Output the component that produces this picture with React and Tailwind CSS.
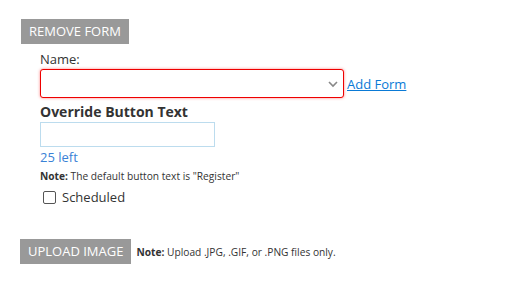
import React from 'react';

export default function App() {
  return (
    <div className="min-h-screen bg-white pt-[18px] pl-[21px] text-[#333] font-['Open_Sans',sans-serif]">
      <button className="h-[25px] px-[8px] bg-[#999] text-white text-[13px] leading-[25px] uppercase">
        Remove Form
      </button>

      <div className="ml-[19px] mt-[6px]">
        <label className="block text-[13px] leading-[18px]">Name:</label>
        <div className="flex items-end gap-[3px] mt-[1px]">
          <div className="relative w-[304px] h-[29px] border border-[#e00] rounded-[3px] shadow-[0_0_3px_rgba(255,0,0,0.5)] bg-white">
            <svg className="absolute right-[4px] top-[9px]" width="12" height="10" viewBox="0 0 12 10" fill="none">
              <path d="M2 3 L6 7 L10 3" stroke="#888" strokeWidth="1.6" />
            </svg>
          </div>
          <a href="#" className="text-[13px] leading-[20px] text-[#0a7ad6] underline mb-[4px]">Add Form</a>
        </div>

        <div className="mt-[4px] font-bold text-[14px] leading-[19px]">Override Button Text</div>
        <div className="mt-[1px] w-[175px] h-[25px] border border-[#bcdcee] bg-white"></div>
        <div className="mt-[1px] text-[13px] leading-[18px] text-[#3a82d6]">25 left</div>
        <div className="mt-[3px] text-[10.2px] leading-[14px]">
          <span className="font-bold">Note:</span> The default button text is "Register"
        </div>
        <label className="flex items-center mt-[5px] ml-[3px] text-[13px] leading-[18px]">
          <span className="w-[13px] h-[13px] border border-[#555] rounded-[2px] bg-white"></span>
          <span className="ml-[6px]">Scheduled</span>
        </label>
      </div>

      <div className="flex items-center mt-[33px] -ml-[1px]">
        <button className="h-[25px] px-[8px] bg-[#999] text-white text-[13px] leading-[25px] uppercase">
          Upload Image
        </button>
        <span className="ml-[5px] text-[10.2px] leading-[14px]">
          <span className="font-bold">Note:</span> Upload .JPG, .GIF, or .PNG files only.
        </span>
      </div>
    </div>
  );
}
